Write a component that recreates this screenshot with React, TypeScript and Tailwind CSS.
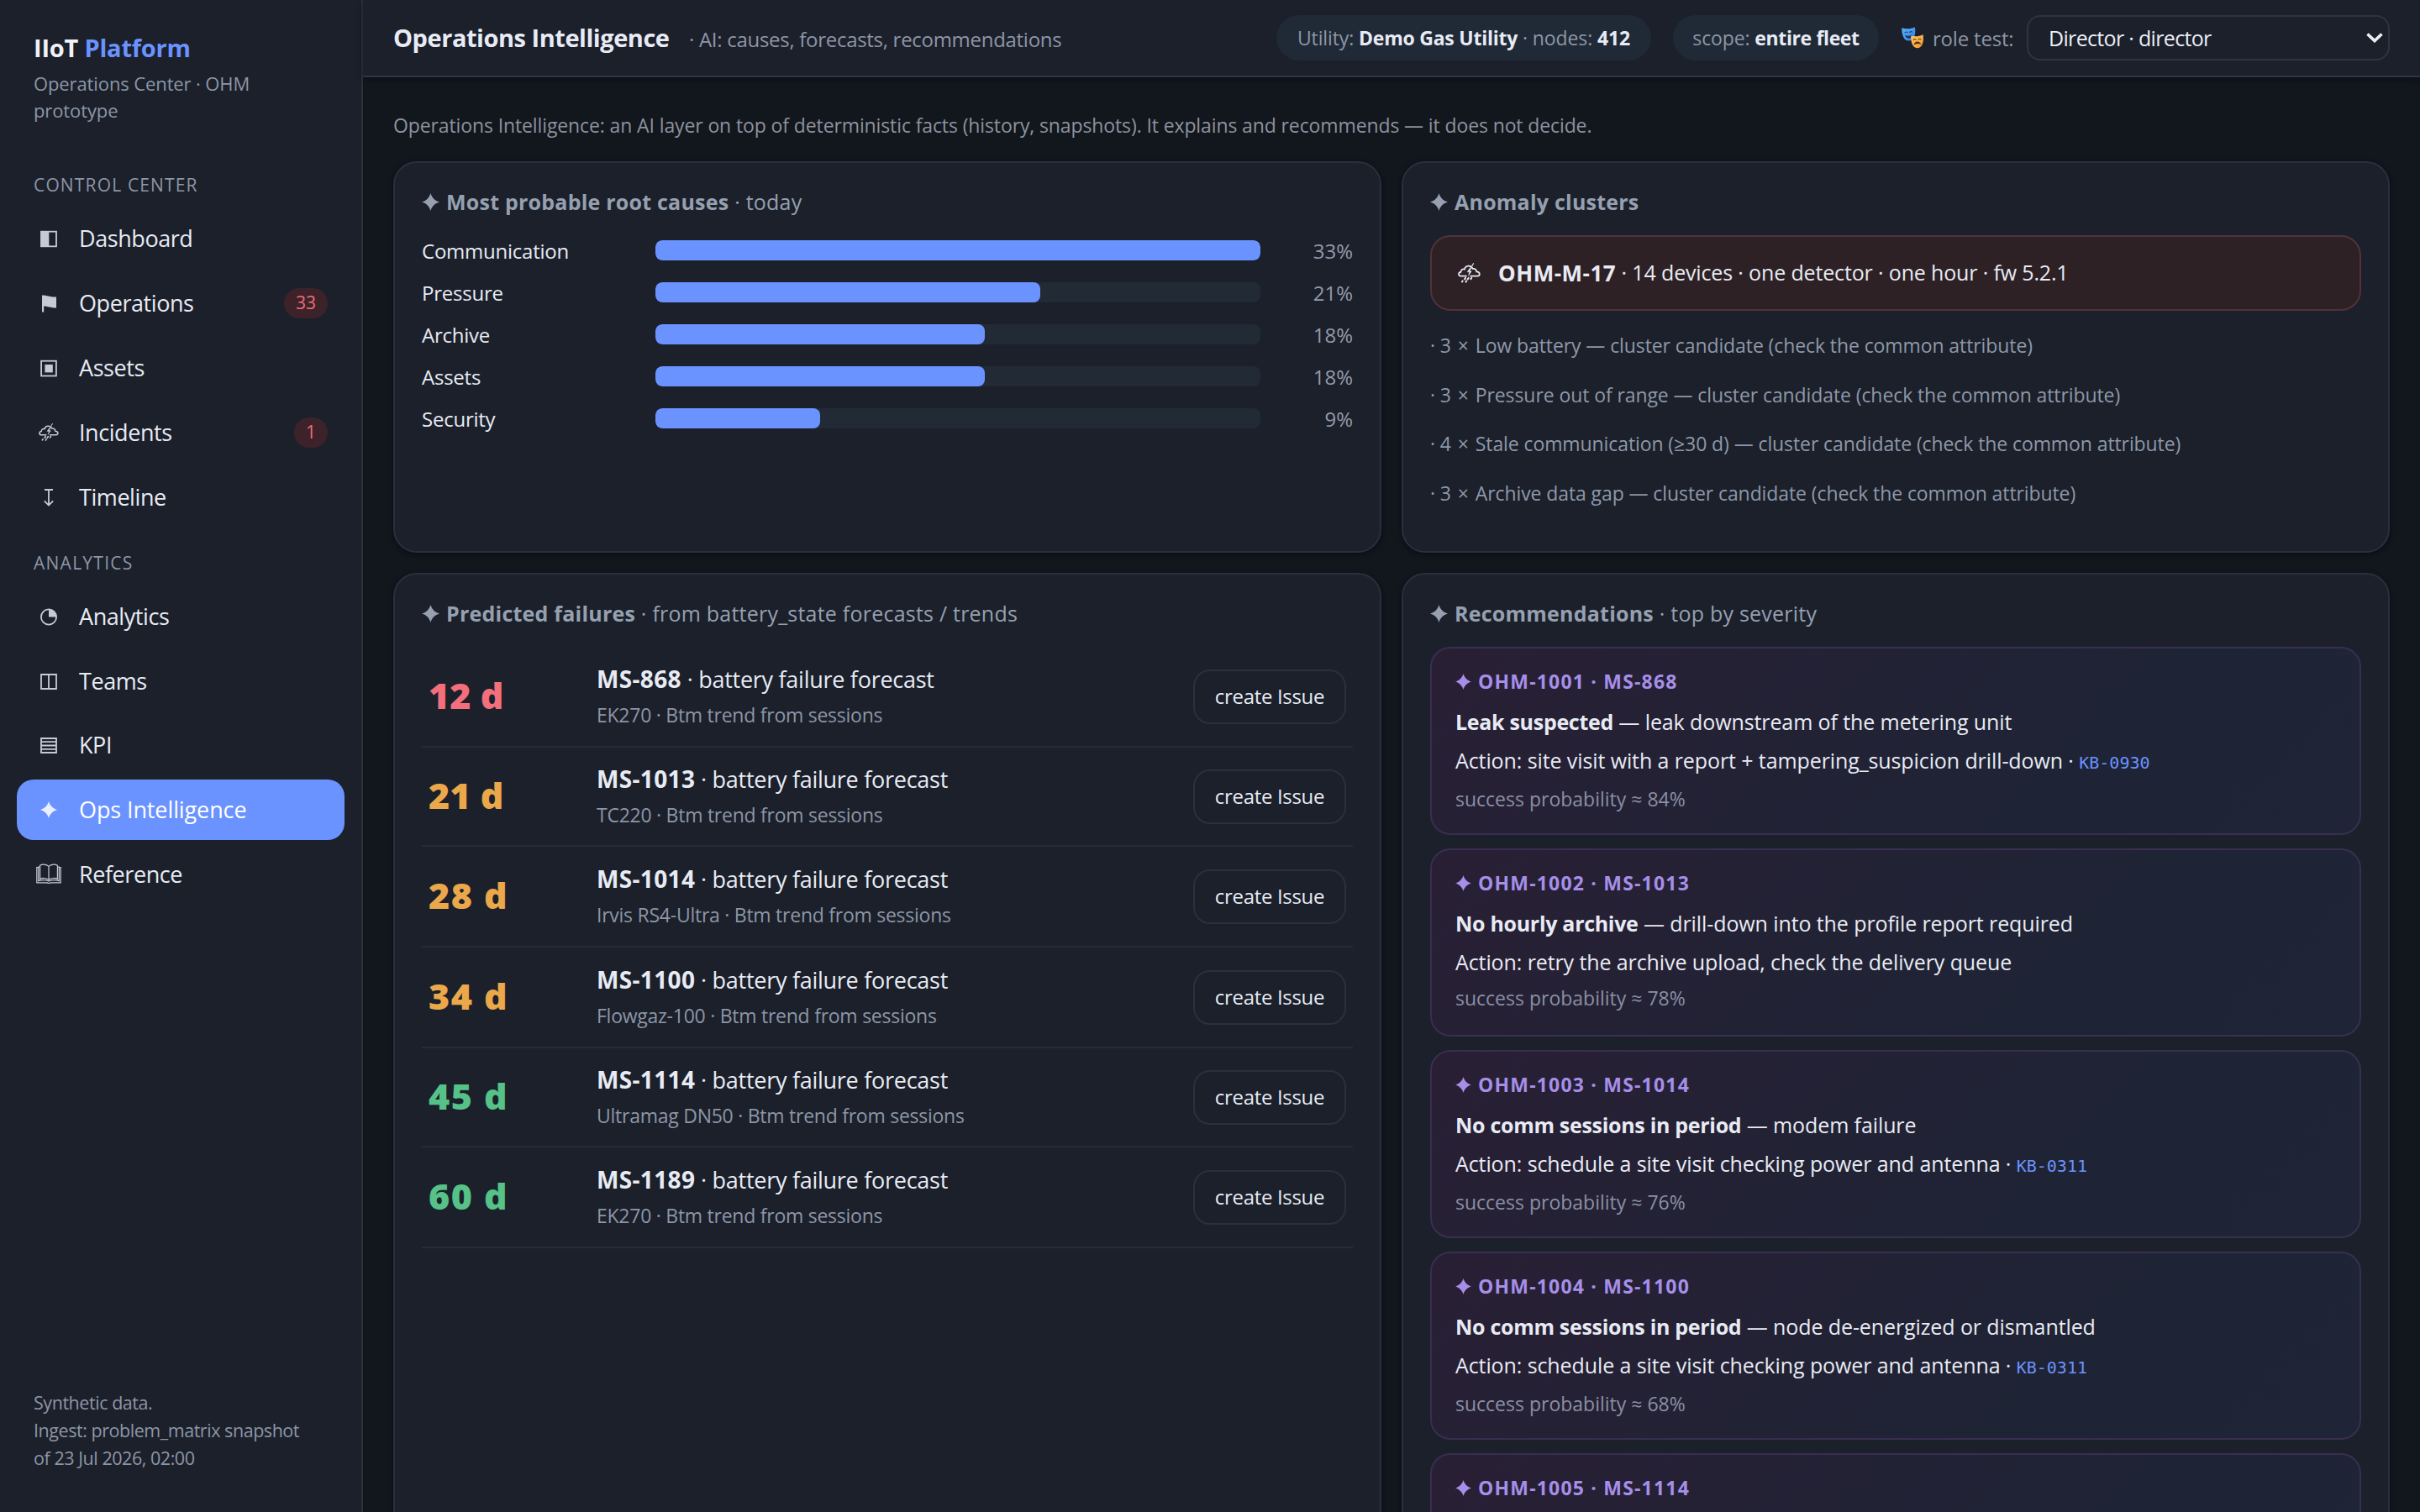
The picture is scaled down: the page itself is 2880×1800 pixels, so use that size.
import type { ReactNode } from "react";

const box = "h-[26px] w-[30px] overflow-visible";

function Star({ className }: { className: string }) {
  return (
    <svg viewBox="0 0 20 20" className={className} fill="currentColor">
      <path d="M10 0 C11.4 5 15 8.6 20 10 C15 11.4 11.4 15 10 20 C8.6 15 5 11.4 0 10 C5 8.6 8.6 5 10 0Z" />
    </svg>
  );
}

function StormIcon({ className }: { className: string }) {
  return (
    <svg viewBox="0 0 26 24" className={className} fill="none" stroke="currentColor" strokeWidth="1.7" strokeLinejoin="round" strokeLinecap="round">
      <path d="M9.6 15 H3.2 C0.2 15 0.2 10.8 3.4 10.4 C3.6 7.4 5.8 6.6 7.6 7.4 C8.6 2.6 14.8 2 17 6.6 C19.6 6 21.4 7.8 21.4 10 C25.8 10.2 25.8 15 22.6 15 H14.6" />
      <path d="M17.8 0.6 L16.2 3.4" strokeWidth="1.1" />
      <path d="M14 5.6 L10.6 10.4 H13 L12 14.8 L15.8 9.4 H13.6 L15.4 5.6Z" fill="currentColor" strokeWidth="0.3" />
      <path d="M8.8 17 L7.8 18.6 M12.2 17.2 L11.2 18.8 M15.6 17 L14.8 18.4 M5.4 20.6 L4.8 21.6 M9.8 20.6 L9.2 21.8" strokeWidth="1.9" />
    </svg>
  );
}

const icons: Record<string, ReactNode> = {
  dashboard: (
    <svg viewBox="0 0 30 26" className={box}>
      <rect x="6" y="4.7" width="18" height="17.6" fill="none" stroke="currentColor" strokeWidth="1.8" />
      <rect x="5.5" y="4" width="9.8" height="19" fill="currentColor" />
    </svg>
  ),
  flag: (
    <svg viewBox="0 0 30 26" className={box} fill="currentColor">
      <path d="M7 3.5 C13 3.6 17 5.8 24 5.6 V18.4 C17 18.4 13.5 16.4 9.2 16.4 V23.5 H7Z" />
    </svg>
  ),
  assets: (
    <svg viewBox="0 0 30 26" className={box}>
      <rect x="6.1" y="4.7" width="17.8" height="17.8" fill="none" stroke="currentColor" strokeWidth="1.8" />
      <rect x="10.4" y="9" width="9.4" height="9.4" fill="currentColor" />
    </svg>
  ),
  storm: <StormIcon className="h-[22px] w-6" />,
  timeline: (
    <svg viewBox="0 0 30 26" className={box} fill="none" stroke="currentColor" strokeWidth="1.8">
      <path d="M10 4 H20 M15 4 V22 M9.8 17.4 L15 22.4 L20.2 17.4" />
    </svg>
  ),
  analytics: (
    <svg viewBox="0 0 30 26" className={box}>
      <circle cx="15" cy="13.5" r="9.1" fill="none" stroke="currentColor" strokeWidth="1.8" />
      <path d="M15 13.5 V4.5 A9 9 0 0 1 24 13.5Z" fill="currentColor" />
    </svg>
  ),
  teams: (
    <svg viewBox="0 0 30 26" className={box} fill="none" stroke="currentColor" strokeWidth="1.8">
      <path d="M6 5 H24 V22 H6Z M15 5 V22" />
    </svg>
  ),
  kpi: (
    <svg viewBox="0 0 30 26" className={box} fill="none" stroke="currentColor" strokeWidth="1.8">
      <path d="M6 5 H24 V22 H6Z M6 9.2 H24 M6 13.5 H24 M6 17.8 H24" />
    </svg>
  ),
  star: <Star className="h-5 w-5" />,
  book: (
    <svg viewBox="0 0 30 24" className="h-6 w-[30px]" fill="none" stroke="currentColor" strokeWidth="1.2">
      <path d="M15 3.4 C12 0.4 7 0.6 4.6 2.2 V18.4 C7.4 17 12 17 15 19.4 C18 17 22.6 17 25.4 18.4 V2.2 C23 0.6 18 0.4 15 3.4Z M15 3.4 V19.4" />
      <path d="M4.6 4 H2.7 V20.6 C7 19.4 12 19.4 15 21 C18 19.4 23 19.4 27.3 20.6 V4 H25.4" />
      <path d="M2.7 4.6 H0.8 V22.8 H13 C14 23.6 16 23.6 17 22.8 H29.2 V4.6 H27.3" />
    </svg>
  ),
};

type Item = { icon: string; label: string; badge?: string; active?: boolean };

const control: Item[] = [
  { icon: "dashboard", label: "Dashboard" },
  { icon: "flag", label: "Operations", badge: "33" },
  { icon: "assets", label: "Assets" },
  { icon: "storm", label: "Incidents", badge: "1" },
  { icon: "timeline", label: "Timeline" },
];
const analytics: Item[] = [
  { icon: "analytics", label: "Analytics" },
  { icon: "teams", label: "Teams" },
  { icon: "kpi", label: "KPI" },
  { icon: "star", label: "Ops Intelligence", active: true },
  { icon: "book", label: "Reference" },
];

function NavItem({ item }: { item: Item }) {
  return (
    <a
      className={
        "flex h-[72px] items-center rounded-[20px] pr-5 pl-5 text-[27px] " +
        (item.active ? "bg-[#6b93ff] tracking-[-0.004em] text-white" : "tracking-[-0.016em] text-[#e8ebf3]")
      }
    >
      <span className={"mr-[18px] flex w-9 justify-center " + (item.active ? "text-[#e9efff]" : "text-[#c6cad5]")}>
        {icons[item.icon]}
      </span>
      <span className="pt-px">{item.label}</span>
      {item.badge && (
        <span className="ml-auto flex h-9 min-w-10 items-center justify-center rounded-full bg-[#3d2329] px-[14px] text-[21px] tracking-normal text-[#f06b78]">
          {item.badge}
        </span>
      )}
    </a>
  );
}

function Sidebar() {
  return (
    <aside className="flex w-[432px] shrink-0 flex-col border-r-2 border-[#2c313d] bg-[#1b202b] px-5 pt-[37px] pb-12">
      <div className="pl-5">
        <div className="text-[29px] leading-10 font-bold tracking-[-0.007em] text-[#f0f2f8]">
          IIoT <span className="text-[#6b93ff]">Platform</span>
        </div>
        <div className="mt-1.5 w-[300px] text-[22px] leading-8 tracking-[-0.005em] text-[#8d96a6]">
          Operations Center · OHM prototype
        </div>
      </div>
      <div className="mt-[59px] pl-5 text-[21px] leading-7 tracking-[0.055em] text-[#8d96a6]">CONTROL CENTER</div>
      <nav className="mt-[14px] flex flex-col gap-[5px]">
        {control.map((i) => (
          <NavItem key={i.label} item={i} />
        ))}
      </nav>
      <div className="mt-[28px] pl-5 text-[21px] leading-7 tracking-[0.06em] text-[#8d96a6]">ANALYTICS</div>
      <nav className="mt-[14px] flex flex-col gap-[4.6px]">
        {analytics.map((i) => (
          <NavItem key={i.label} item={i} />
        ))}
      </nav>
      <div className="mt-auto pl-5 text-[21.5px] leading-[33px] tracking-[-0.021em] whitespace-nowrap text-[#8d96a6]">
        Synthetic data.
        <br />
        Ingest: problem_matrix snapshot
        <br />
        of 23 Jul 2026, 02:00
      </div>
    </aside>
  );
}

function Masks() {
  return (
    <svg viewBox="0 0 26 26" className="h-[26px] w-[26px]">
      <defs>
        <linearGradient id="happy" x1="0" y1="0" x2="1" y2="1">
          <stop offset="0" stopColor="#5cb8fb" />
          <stop offset="1" stopColor="#2f7de0" />
        </linearGradient>
        <linearGradient id="sad" x1="0" y1="0" x2="1" y2="1">
          <stop offset="0" stopColor="#ffc65c" />
          <stop offset="1" stopColor="#f09a35" />
        </linearGradient>
      </defs>
      <path d="M0.4 1.2 C5 3 11 2.4 15.8 0.2 C16.6 4.6 16.6 8.4 15 12 C12.6 17.4 5.6 18 2.8 13.2 C0.8 9.6 0.2 5.4 0.4 1.2Z" fill="url(#happy)" />
      <path d="M4 6.8 Q5.6 5.4 7 6.6 M9.6 6.4 Q11.2 5 12.6 6.2" fill="none" stroke="#1d3f7c" strokeWidth="1.1" strokeLinecap="round" />
      <path d="M3.8 9.8 Q8.6 12 13.2 9 Q12 13.6 8.8 13.8 Q5.4 13.8 3.8 9.8Z" fill="#1d3362" />
      <path d="M11.4 10.2 C16 12 20.6 11.6 25.6 9 C26.2 13 26.2 17.4 24.6 21 C22.4 26 16.6 26.6 13.8 22.6 C11.4 19 11 14.4 11.4 10.2Z" fill="url(#sad)" />
      <path d="M14.2 15.4 Q15.6 14 17 15.2 M20 15 Q21.4 13.6 22.8 14.8" fill="none" stroke="#7a3d18" strokeWidth="1.1" strokeLinecap="round" />
      <path d="M14.4 21.4 Q15.6 17.6 18.8 17.4 Q22.2 17.4 23.4 21 Q18.8 18.6 14.4 21.4Z" fill="#5c2b14" />
    </svg>
  );
}

function Header() {
  return (
    <header className="z-10 flex h-[92px] shrink-0 items-center border-b-2 border-[#2f3441] bg-[#1b202b] pr-9 pl-9 shadow-[0_2px_8px_rgba(0,0,0,0.35)]">
      <div className="flex items-baseline pt-0.5 whitespace-nowrap">
        <h1 className="w-[352px] text-[29px] leading-[38px] font-bold tracking-[-0.016em] text-[#e8ebf5]">
          Operations Intelligence
        </h1>
        <span className="text-[24px] leading-[38px] tracking-[-0.012em] text-[#8d96a6]">
          · AI: causes, forecasts, recommendations
        </span>
      </div>
      <div className="ml-auto flex items-center whitespace-nowrap text-[#8d96a6]">
        <div className="mr-[26px] flex h-[54px] w-[446px] items-center justify-center rounded-full bg-[#202a36] text-[23px] tracking-[-0.005em]">
          <span>
            Utility: <b className="tracking-[-0.01em] text-[#e8ebf5]">Demo Gas Utility</b> · nodes: <b className="text-[#e8ebf5]">412</b>
          </span>
        </div>
        <div className="mr-[27px] flex h-[54px] w-[245px] items-center justify-center rounded-full bg-[#202a36] text-[23px] tracking-[-0.005em]">
          <span>
            scope: <b className="tracking-[-0.016em] text-[#e8ebf5]">entire fleet</b>
          </span>
        </div>
        <Masks />
        <span className="ml-[11px] w-[112px] pt-0.5 text-[24px] tracking-[-0.008em]">role test:</span>
        <div className="relative">
          <select className="block h-[54px] w-[432px] appearance-none rounded-[16px] border-2 border-[#2f3441] bg-[#1b202b] pt-0.5 pl-6 text-[25px] tracking-[-0.027em] text-[#eceef6]">
            <option>Director · director</option>
          </select>
          <svg viewBox="0 0 20 12" className="pointer-events-none absolute top-[21px] right-2 h-3 w-5" fill="none" stroke="#eceef6" strokeWidth="3.6">
            <path d="M1.5 1.5 L10 9.6 L18.5 1.5" />
          </svg>
        </div>
      </div>
    </header>
  );
}

function Card({ title, note, children }: { title: string; note?: string; children: ReactNode }) {
  return (
    <section className="rounded-[28px] border-2 border-[#2a2f3c] bg-[#1b202b] px-8 pt-7 shadow-[0_2px_6px_rgba(0,0,0,0.4)]">
      <h2 className="flex items-center text-[25px] leading-9 whitespace-pre text-[#96a0b0]">
        <Star className="mr-2 h-[21px] w-[21px]" />
        <b className="tracking-[0.009em]">{title}</b>
        {note && <span className="tracking-[0.009em]"> · {note}</span>}
      </h2>
      {children}
    </section>
  );
}

const causes = [
  { name: "Communication", pct: 33, width: 100 },
  { name: "Pressure", pct: 21, width: 63.6 },
  { name: "Archive", pct: 18, width: 54.5 },
  { name: "Assets", pct: 18, width: 54.5 },
  { name: "Security", pct: 9, width: 27.2 },
];

const clusters = [
  { count: 3, name: "Low battery" },
  { count: 3, name: "Pressure out of range" },
  { count: 4, name: "Stale communication (≥30 d)" },
  { count: 3, name: "Archive data gap" },
];

const failures = [
  { days: 12, node: "MS-868", device: "EK270", color: "tracking-[0.001em] text-[#f26f7b]" },
  { days: 21, node: "MS-1013", device: "TC220", color: "tracking-[0.001em] text-[#eba84b]" },
  { days: 28, node: "MS-1014", device: "Irvis RS4-Ultra", color: "tracking-[0.034em] text-[#eba84b]" },
  { days: 34, node: "MS-1100", device: "Flowgaz-100", color: "tracking-[0.034em] text-[#eba84b]" },
  { days: 45, node: "MS-1114", device: "Ultramag DN50", color: "tracking-[0.034em] text-[#56c288]" },
  { days: 60, node: "MS-1189", device: "EK270", color: "tracking-[0.034em] text-[#56c288]" },
];

type Rec = { id: string; what?: string; why?: string; action?: string; kb?: string; p?: number };

const recs: Rec[] = [
  { id: "OHM-1001 · MS-868", what: "Leak suspected", why: "leak downstream of the metering unit", action: "site visit with a report + tampering_suspicion drill-down", kb: "KB-0930", p: 84 },
  { id: "OHM-1002 · MS-1013", what: "No hourly archive", why: "drill-down into the profile report required", action: "retry the archive upload, check the delivery queue", p: 78 },
  { id: "OHM-1003 · MS-1014", what: "No comm sessions in period", why: "modem failure", action: "schedule a site visit checking power and antenna", kb: "KB-0311", p: 76 },
  { id: "OHM-1004 · MS-1100", what: "No comm sessions in period", why: "node de-energized or dismantled", action: "schedule a site visit checking power and antenna", kb: "KB-0311", p: 68 },
  { id: "OHM-1005 · MS-1114" },
];

export default function App() {
  return (
    <div className="flex h-[1800px] w-[2880px] overflow-hidden bg-[#12161d] font-['Open_Sans','Noto_Sans',sans-serif] text-[#e8ebf3]">
      <Sidebar />
      <div className="flex min-w-0 flex-1 flex-col">
        <Header />
        <main className="flex-1 overflow-hidden px-9 pt-[41px]">
          <p className="mb-[27px] text-[23px] leading-8 tracking-[-0.005em] whitespace-nowrap text-[#8d929d]">
            Operations Intelligence: an AI layer on top of deterministic facts (history, snapshots). It explains and
            recommends — it does not decide.
          </p>
          <div className="grid grid-cols-2 grid-rows-[466px_1260px] gap-6">
            <Card title="Most probable root causes" note="today">
              <div className="mt-[23px] flex flex-col gap-4">
                {causes.map((c) => (
                  <div key={c.name} className="flex h-[34px] items-center text-[24px] leading-[34px]">
                    <span className="w-[278px] pt-0.5 tracking-[-0.01em]">{c.name}</span>
                    <span className="h-6 w-[720px] overflow-hidden rounded-[8px] bg-[#212a35]">
                      <span className="block h-6 rounded-[8px] bg-[#6b93ff]" style={{ width: `${c.width}%` }} />
                    </span>
                    <span className="ml-auto pt-0.5 text-[#939aa8]">{c.pct}%</span>
                  </div>
                ))}
              </div>
            </Card>

            <Card title="Anomaly clusters">
              <div className="mt-[22px] flex h-[90px] items-center rounded-[24px] border-2 border-[#523239] bg-[#2d2126] pl-[31px] text-[25px] tracking-[-0.006em] whitespace-pre">
                <StormIcon className="mr-[21px] h-[25px] w-[27px]" />
                <b className="text-[26px] tracking-[0.02em]">OHM-M-17</b>
                <span> · 14 devices · one detector · one hour · fw 5.2.1</span>
              </div>
              <div className="mt-3 text-[23px] tracking-[-0.004em] text-[#8f98a8]">
                {clusters.map((c) => (
                  <div key={c.name} className="flex h-[58.7px] items-center">
                    <span>
                      · {c.count} <span className="px-[2px]">×</span> {c.name} — cluster candidate (check the common attribute)
                    </span>
                  </div>
                ))}
              </div>
            </Card>

            <Card title="Predicted failures" note="from battery_state forecasts / trends">
              <div className="mt-[22px]">
                {failures.map((f) => (
                  <div
                    key={f.node}
                    className="flex h-[120px] items-center border-b-2 border-[#262c37] px-2 nth-[3n+2]:h-[118px]"
                  >
                    <div className={"w-[200px] pb-0.5 text-[43px] font-extrabold " + f.color}>{f.days} d</div>
                    <div className="pb-px">
                      <div className="text-[27px] leading-[38px] tracking-[-0.01em]">
                        <b className="text-[28px] tracking-[0.012em]">{f.node}</b> · battery failure forecast
                      </div>
                      <div className="mt-[5px] text-[23px] leading-9 tracking-[-0.011em] text-[#8d96a6]">
                        {f.device} · Btm trend from sessions
                      </div>
                    </div>
                    <button className="ml-auto h-[65px] w-[182px] rounded-[20px] border-2 border-[#2b303d] text-[24px] tracking-[-0.013em]">
                      create Issue
                    </button>
                  </div>
                ))}
              </div>
            </Card>

            <Card title="Recommendations" note="top by severity">
              <div className="mt-[22px] flex flex-col gap-4">
                {recs.map((r) => (
                  <div
                    key={r.id}
                    className="h-56 rounded-[24px] border-2 border-[#382f50] bg-[linear-gradient(135deg,#291f35_0%,#1e2435_70%,#1f2536_100%)] px-7 pt-[23px]"
                  >
                    <div className="flex items-center text-[23px] leading-8 font-bold tracking-[0.052em] text-[#a68fe8]">
                      <Star className="mr-2 h-[19px] w-[19px]" />
                      {r.id}
                    </div>
                    {r.what && (
                      <>
                        <div className="mt-[9px] text-[25px] leading-[46px] tracking-[-0.004em]">
                          <b className="tracking-[-0.012em]">{r.what}</b> — {r.why}
                          <br />
                          Action: {r.action}
                          {r.kb && (
                            <>
                              {" · "}
                              <span className="font-['DejaVu_Sans_Mono',monospace] text-[20px] tracking-normal text-[#6b93ff]">
                                {r.kb}
                              </span>
                            </>
                          )}
                        </div>
                        <div className="mt-0.5 text-[23px] leading-9 text-[#8b8fa3]">success probability ≈ {r.p}%</div>
                      </>
                    )}
                  </div>
                ))}
              </div>
            </Card>
          </div>
        </main>
      </div>
    </div>
  );
}
